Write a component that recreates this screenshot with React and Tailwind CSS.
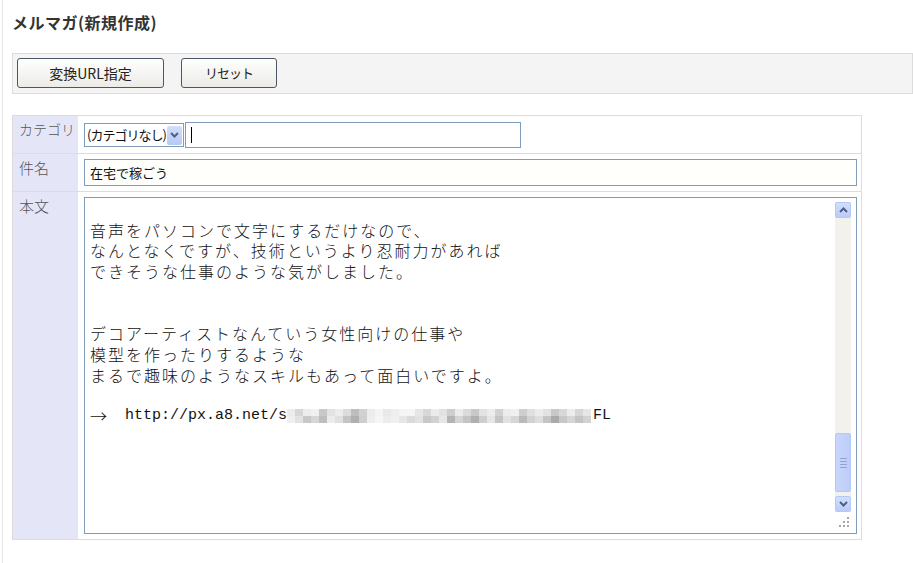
import React from 'react';

const jp = { fontFamily: '"Noto Sans CJK JP", "Noto Sans", sans-serif' };

// モザイク部分のグレー値（上段・下段）
const mosaicTop = [236, 214, 236, 240, 200, 226, 236, 220, 190, 210, 236, 244, 232, 238, 244, 246, 230, 216, 236, 226, 206, 236, 218, 200, 226, 236, 210, 236, 240, 206, 224, 236, 226, 200, 216, 236, 214, 230];
const mosaicBottom = [240, 226, 200, 214, 190, 236, 224, 196, 176, 206, 238, 246, 236, 240, 230, 218, 226, 200, 210, 230, 180, 212, 196, 176, 206, 230, 196, 226, 214, 186, 210, 222, 196, 170, 200, 214, 196, 210];

const Mosaic = () => (
  <svg width="306" height="16" viewBox="0 0 306 16" className="inline-block align-middle">
    {mosaicTop.map((g, i) => (
      <rect key={'t' + i} x={i * 8} y="1" width="8" height="7" fill={`rgb(${g},${g},${g})`} />
    ))}
    {mosaicBottom.map((g, i) => (
      <rect key={'b' + i} x={i * 8} y="8" width="8" height="7" fill={`rgb(${g},${g},${g})`} />
    ))}
  </svg>
);

const Arrow = ({ down }) => (
  <svg width="9" height="6" viewBox="0 0 9 6">
    <path d={down ? 'M1 1 L4.5 4.5 L8 1' : 'M1 5 L4.5 1.5 L8 5'} fill="none" stroke="#4d6185" strokeWidth="2" />
  </svg>
);

const ScrollButton = ({ down }) => (
  <div className="h-[16px] w-[16px] rounded-[2px] border border-[#b4c8f6] bg-gradient-to-b from-[#d2defc] to-[#b9ccf8] flex items-center justify-center">
    <Arrow down={down} />
  </div>
);

const bodyLines = [
  '',
  '音声をパソコンで文字にするだけなので、',
  'なんとなくですが、技術というより忍耐力があれば',
  'できそうな仕事のような気がしました。',
  '',
  '',
  'デコアーティストなんていう女性向けの仕事や',
  '模型を作ったりするような',
  'まるで趣味のようなスキルもあって面白いですよ。',
  '',
];

export default function App() {
  return (
    <div className="min-h-[563px] bg-white" style={jp}>
      <div className="ml-[2px] min-h-[563px] border-l border-[#e4e4e4] pl-[9px]">
        <h1 className="pt-[10px] h-[53px] text-[16px] font-bold text-[#333] tracking-[0.5px]">メルマガ(新規作成)</h1>

        <div className="h-[41px] border border-[#dcdcdc] bg-[#f4f4f4] flex items-start pt-[4px] pl-[4px] gap-[17px]">
          <button className="h-[30px] w-[147px] rounded-[3px] border border-[#4a5866] bg-gradient-to-b from-white to-[#ecebe6] text-[14px] text-[#222]">
            変換URL指定
          </button>
          <button className="h-[30px] w-[96px] rounded-[3px] border border-[#4a5866] bg-gradient-to-b from-white to-[#ecebe6] text-[13px] text-[#222] tracking-[-1px]">
            リセット
          </button>
        </div>

        <div className="mt-[21px] w-[850px] border border-[#dcdcdc] grid grid-cols-[65px_1fr]">
          {/* カテゴリ */}
          <div className="h-[38px] bg-[#e5e5f8] border-b border-[#dcdcdc] pl-[6px] pt-[3px] text-[14px] text-[#555] font-light">カテゴリ</div>
          <div className="h-[38px] border-b border-[#dcdcdc] pl-[6px] pt-[6px] flex items-start">
            <div className="mt-[1px] h-[24px] w-[100px] border border-[#7f9db9] bg-white flex items-center justify-between pl-[2px] pr-[1px]">
              <span className="text-[13px] text-[#111] tracking-[-1px] whitespace-nowrap">(カテゴリなし)</span>
              <div className="h-[19px] w-[15px] shrink-0 rounded-[2px] bg-gradient-to-b from-[#d2defc] to-[#b6caf6] flex items-center justify-center">
                <Arrow down />
              </div>
            </div>
            <div className="ml-[1px] h-[26px] w-[336px] border border-[#7f9db9] bg-white flex items-center pl-[5px]">
              <span className="h-[16px] w-[1px] bg-black" />
            </div>
          </div>

          {/* 件名 */}
          <div className="h-[38px] bg-[#e5e5f8] border-b border-[#dcdcdc] pl-[6px] pt-[3px] text-[15px] text-[#555] font-light">件名</div>
          <div className="h-[38px] border-b border-[#dcdcdc] pl-[6px] pt-[5px]">
            <div className="h-[27px] w-[773px] border border-[#7f9db9] bg-[#fffffc] flex items-center pl-[5px] text-[13px] text-[#111]">
              在宅で稼ごう
            </div>
          </div>

          {/* 本文 */}
          <div className="h-[347px] bg-[#e5e5f8] pl-[6px] pt-[3px] text-[15px] text-[#555] font-light">本文</div>
          <div className="h-[347px] pl-[6px] pt-[5px]">
            <div className="h-[337px] w-[773px] border border-[#7f9db9] bg-white flex">
              <div className="flex-1 pl-[5px] pt-[1px] text-[16px] leading-[20.7px] tracking-[2px] text-[#111] font-light whitespace-pre">
                {bodyLines.map((l, i) => (
                  <div key={i} className="h-[20.7px]">{l}</div>
                ))}
                <div className="h-[20.7px] flex items-center tracking-normal">
                  <span className="w-[35px] text-[17px]">→</span>
                  <span className="text-[15px]" style={{ fontFamily: '"Liberation Mono", monospace' }}>http://px.a8.net/s</span>
                  <Mosaic />
                  <span className="text-[15px]" style={{ fontFamily: '"Liberation Mono", monospace' }}>FL</span>
                </div>
              </div>
              <div className="w-[16px] mr-[5px] mt-[4px] flex flex-col">
                <div className="h-[310px] bg-[#f2f1ec] flex flex-col">
                  <ScrollButton />
                  <div className="flex-1" />
                  <div className="h-[59px] rounded-[2px] border border-[#b4c8f6] bg-gradient-to-r from-[#c8d6fc] to-[#bccdf8] flex flex-col items-center justify-center gap-[2px]">
                    <span className="h-[1px] w-[7px] bg-[#8ea4d8]" />
                    <span className="h-[1px] w-[7px] bg-[#8ea4d8]" />
                    <span className="h-[1px] w-[7px] bg-[#8ea4d8]" />
                    <span className="h-[1px] w-[7px] bg-[#8ea4d8]" />
                  </div>
                  <div className="h-[4px]" />
                  <ScrollButton down />
                </div>
                <div className="mt-[4px] h-[12px] flex justify-end pr-[1px]">
                  <svg width="12" height="12" viewBox="0 0 12 12">
                    <rect x="9" y="1" width="2" height="2" fill="#a8a8a8" />
                    <rect x="5" y="5" width="2" height="2" fill="#a8a8a8" />
                    <rect x="9" y="5" width="2" height="2" fill="#a8a8a8" />
                    <rect x="1" y="9" width="2" height="2" fill="#a8a8a8" />
                    <rect x="5" y="9" width="2" height="2" fill="#a8a8a8" />
                    <rect x="9" y="9" width="2" height="2" fill="#a8a8a8" />
                  </svg>
                </div>
              </div>
            </div>
          </div>
        </div>
      </div>
    </div>
  );
}
